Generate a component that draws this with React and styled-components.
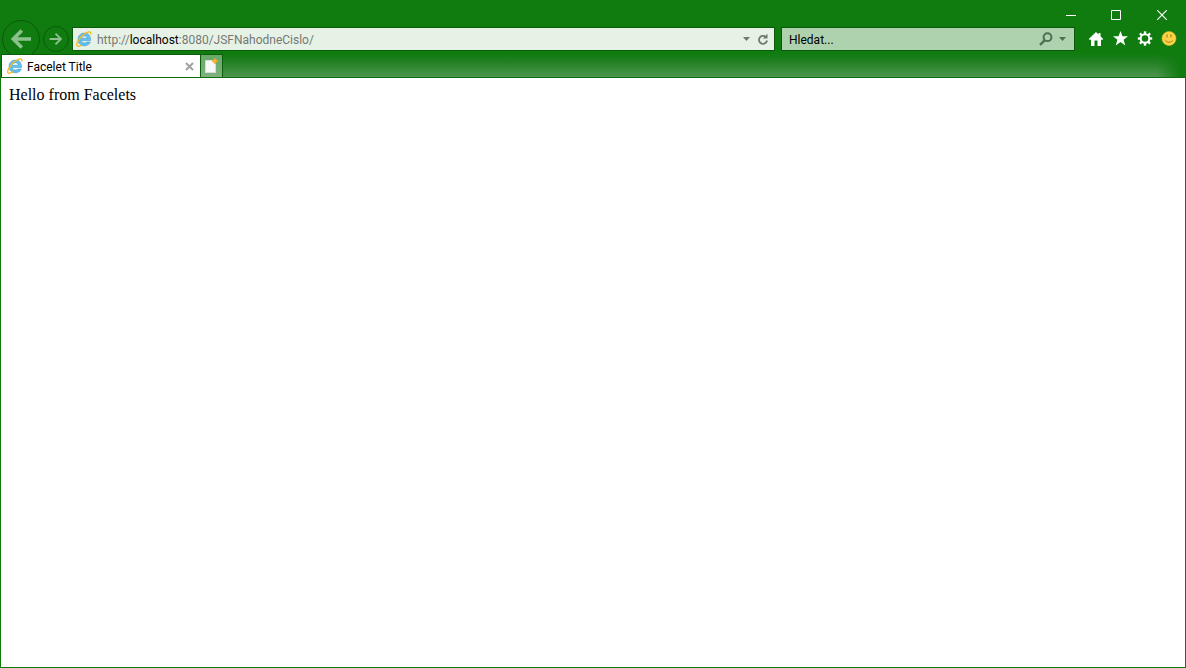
import React, { useState } from "react";
import styled, { createGlobalStyle } from "styled-components";

const GlobalStyle = createGlobalStyle`
  *, *::before, *::after { box-sizing: border-box; }
  body { margin: 0; background: #fff; }
  button, input { font: inherit; }
`;

const uiFont = `Roboto, "Open Sans", sans-serif`;

const BrowserWindow = styled.div`
  display: flex;
  flex-direction: column;
  min-height: 100vh;
  background: #107c10;
  font: 12px/16px ${uiFont};
  color: #000;
`;

const IconButton = styled.button`
  display: flex;
  align-items: center;
  justify-content: center;
  flex: none;
  width: ${(p) => p.$width || 24}px;
  height: ${(p) => p.$height || 22}px;
  padding: 0;
  border: 0;
  background: transparent;
  color: ${(p) => p.$color || "#fff"};
`;

const TitleBar = styled.header`
  display: flex;
  justify-content: flex-end;
  height: 27px;
  padding: 3px 1px 0 0;
`;

const Toolbar = styled.nav`
  display: flex;
  align-items: center;
  height: 24px;
  padding: 0 5px 0 2px;
`;

const RoundButton = styled.button`
  display: flex;
  align-items: center;
  justify-content: center;
  flex: none;
  width: ${(p) => p.$size}px;
  height: ${(p) => p.$size}px;
  margin-right: 3px;
  padding: 0;
  border: 1px solid #0b590b;
  border-radius: 50%;
  background: #107c10;
  color: #8cc08c;
`;

const Field = styled.form`
  display: flex;
  align-items: center;
  height: 24px;
  min-width: 0;
  border: 1px solid #0b590b;
  background: ${(p) => p.$fill};
`;

const AddressField = styled(Field)`
  flex: 1;
  padding: 0 2px 0 3px;
  margin: 0 6px 0 0;
`;

const SearchField = styled(Field)`
  flex: 0 1 294px;
  padding: 0 6px 0 7px;
  margin: 0 10px 0 0;
`;

const TextInput = styled.input`
  flex: 1;
  width: 100%;
  min-width: 0;
  height: 22px;
  padding: 2px 0 0;
  border: 0;
  outline: 0;
  background: transparent;
  color: ${(p) => (p.$masked ? "transparent" : "#000")};
  caret-color: #000;
  &::placeholder { color: #000; opacity: 1; }
`;

const AddressText = styled.div`
  position: relative;
  display: flex;
  flex: 1;
  min-width: 0;
  margin-left: 5px;
`;

const AddressOverlay = styled.span`
  position: absolute;
  inset: 4px 0 auto;
  overflow: hidden;
  white-space: nowrap;
  pointer-events: none;
  color: #747874;
  b { color: #000; font-weight: 400; }
`;

const TabStrip = styled.div`
  position: relative;
  display: flex;
  height: 24px;
  margin-top: 3px;
  padding-left: 1px;
  border-bottom: 1px solid #0e6b0e;
`;

const Tab = styled.div`
  display: flex;
  align-items: center;
  width: 200px;
  padding: 0 2px 0 5px;
  border: 1px solid #0b5f0b;
  border-bottom: 0;
  background: #fff;
`;

const TabLabel = styled.span`
  flex: 1;
  margin-left: 4px;
  padding-top: 2px;
  white-space: nowrap;
`;

const NewTabButton = styled.button`
  display: flex;
  align-items: center;
  justify-content: center;
  width: 22px;
  padding: 0 1px 0 0;
  border: 1px solid #0b5f0b;
  border-width: 1px 1px 0 0;
  background: linear-gradient(#68a868, #7eb17e);
`;

const StripGlow = styled.div`
  flex: 1;
  margin-right: 5px;
  background: linear-gradient(#107c10, #207f20 30%, #4d954d);
  mask-image: linear-gradient(to left, transparent, #000 24px);
`;

const Page = styled.main`
  flex: 1;
  margin: 0 1px 1px;
  padding: 8px;
  background: #fff;
  font: 16px/18px "Liberation Serif", "Times New Roman", serif;
`;

function BrowserLogo() {
  return (
    <svg width="16" height="16" viewBox="0 0 16 16" aria-hidden="true">
      <path fillRule="evenodd" d="M14.600 9.600H5.200c.2 1.500 1.600 2.500 3.300 2.500 1.100 0 1.900-.4 2.400-1h3.400c-.9 2.400-3.100 3.700-5.900 3.700-3.900 0-6.400-2.600-6.400-6.300s2.700-6.400 6.500-6.400c4 0 6.300 3 6.100 7.500zM5.200 7.200h6.200c-.2-1.500-1.400-2.400-3-2.400S5.500 5.700 5.200 7.200z" fill="#62c0ee" stroke="#2f92cf" strokeWidth=".5" />
      <path d="M5.500 14c-2.400 1.500-4.200 1.800-4.700.6-.4-1 .1-2.600 1.200-4.500C4.300 6 8.500 2.400 12 1.200c2.400-.8 3.300 0 2.800 1.800" fill="none" stroke="#f7ba1c" strokeWidth="1.300" strokeLinecap="round" />
    </svg>
  );
}

function Arrow({ size, flip }) {
  return (
    <svg width={size} height={size} viewBox="0 0 22 22" aria-hidden="true">
      <path
        d="M21 11H3.500M11.800 2.500L3.300 11l8.500 8.500"
        transform={flip ? "translate(22 0) scale(-1 1)" : undefined}
        fill="none" stroke="currentColor" strokeWidth={flip ? 3 : 3.600}
      />
    </svg>
  );
}

function Caret() {
  return (
    <svg width="7" height="4" viewBox="0 0 7 4" aria-hidden="true">
      <path d="M0 0h7L3.500 4z" fill="currentColor" />
    </svg>
  );
}

function Gear() {
  return (
    <svg width="16" height="16" viewBox="0 0 16 16" aria-hidden="true">
      <circle cx="8" cy="7.500" r="4.300" fill="none" stroke="#fff" strokeWidth="2" />
      {[0, 45, 90, 135, 180, 225, 270, 315].map((a) => (
        <path key={a} d="M6.800.3h2.400v2.600H6.800z" fill="#fff" transform={`rotate(${a} 8 7.5)`} />
      ))}
    </svg>
  );
}

function Smiley() {
  return (
    <svg width="16" height="16" viewBox="0 0 16 16" aria-hidden="true">
      <circle cx="8" cy="7.500" r="7" fill="#fdd243" stroke="#d9bc35" strokeWidth=".6" />
      <path d="M6 3.500v3M10 3.500v3" stroke="#a6812c" strokeWidth="1.200" />
      <path d="M4.200 9.300c1.700 2.600 5.900 2.600 7.600 0" fill="none" stroke="#a6812c" />
    </svg>
  );
}

export default function App() {
  const [address, setAddress] = useState("http://localhost:8080/JSFNahodneCislo/");
  const parts = address.match(/^(\w+:\/\/)?([^:/]*)(.*)$/) || ["", "", address, ""];
  const stay = (e) => e.preventDefault();

  return (
    <BrowserWindow>
      <GlobalStyle />
      <TitleBar>
        <IconButton $width={46} $height={24} aria-label="Minimize">
          <svg width="10" height="11" viewBox="0 0 10 11"><path d="M0 5.500h10" stroke="currentColor" /></svg>
        </IconButton>
        <IconButton $width={45} $height={24} aria-label="Maximize">
          <svg width="11" height="11" viewBox="0 0 11 11"><path d="M.5.5h9v9h-9z" fill="none" stroke="currentColor" /></svg>
        </IconButton>
        <IconButton $width={46} $height={24} aria-label="Close window">
          <svg width="10" height="10" viewBox="0 0 10 10"><path d="M0 0l10 10M10 0L0 10" stroke="currentColor" strokeWidth="1.200" /></svg>
        </IconButton>
      </TitleBar>

      <Toolbar>
        <RoundButton $size={38} aria-label="Back"><Arrow size={22} /></RoundButton>
        <RoundButton $size={26} aria-label="Forward"><Arrow size={14} flip /></RoundButton>
        <AddressField $fill="#e7f2e7" onSubmit={stay}>
          <BrowserLogo />
          <AddressText>
            <TextInput
              $masked
              aria-label="Address"
              spellCheck={false}
              value={address}
              onChange={(e) => setAddress(e.target.value)}
            />
            <AddressOverlay aria-hidden="true">{parts[1]}<b>{parts[2]}</b>{parts[3]}</AddressOverlay>
          </AddressText>
          <IconButton type="button" $width={16} $color="#6f7a6f" aria-label="Show address history"><Caret /></IconButton>
          <IconButton type="button" $width={18} $color="#6f7a6f" aria-label="Refresh">
            <svg width="12" height="13" viewBox="0 0 12 13">
              <path d="M8.500 3.700A4 4 0 1 0 10 7.500" fill="none" stroke="currentColor" strokeWidth="1.800" />
              <path d="M10.500.8v4.700H5.800z" fill="currentColor" />
            </svg>
          </IconButton>
        </AddressField>
        <SearchField $fill="#add2ad" role="search" onSubmit={stay}>
          <TextInput aria-label="Search" placeholder="Hledat..." />
          <IconButton $width={20} $color="#4f6f4f" aria-label="Run search">
            <svg width="14" height="14" viewBox="0 0 14 14">
              <circle cx="8.500" cy="5.200" r="3.900" fill="none" stroke="currentColor" strokeWidth="2" />
              <path d="M5.800 8.200L1 13" stroke="currentColor" strokeWidth="2.400" />
            </svg>
          </IconButton>
          <IconButton type="button" $width={12} $color="#4f6f4f" aria-label="Search options"><Caret /></IconButton>
        </SearchField>
        <IconButton aria-label="Home">
          <svg width="16" height="16" viewBox="1 0 16 16">
            <path d="M8 1L.8 8l1.200 1.200 1-.9V15h3.500V9.500h3V15H13V8.300l1 .9L15.200 8 12.500 5.300V2h-2v1.400z" fill="currentColor" />
          </svg>
        </IconButton>
        <IconButton aria-label="Favorites">
          <svg width="16" height="16" viewBox="0 0 16 16">
            <path d="M7.500 0l2 5.300H15L10.600 8.700l1.700 5.800-4.800-3.400-4.800 3.400 1.700-5.800L0 5.300h5.500z" fill="currentColor" />
          </svg>
        </IconButton>
        <IconButton aria-label="Tools"><Gear /></IconButton>
        <IconButton aria-label="Send feedback"><Smiley /></IconButton>
      </Toolbar>

      <TabStrip>
        <Tab>
          <BrowserLogo />
          <TabLabel>Facelet Title</TabLabel>
          <IconButton $width={18} $color="#a2a2a2" aria-label="Close tab">
            <svg width="9" height="9" viewBox="0 0 9 9"><path d="M1 1l7 7M8 1L1 8" stroke="currentColor" strokeWidth="2" /></svg>
          </IconButton>
        </Tab>
        <NewTabButton aria-label="New tab">
          <svg width="14" height="16" viewBox="0 0 14 16">
            <path d="M1.500 2.500h10v12h-10z" fill="#f8f8f8" stroke="#d9ddd9" />
            <path d="M11 .5l1 1.500 1.800 1-1.800 1-1 1.800-1-1.800-1.800-1 1.800-1z" fill="#ffb52e" stroke="#f2a324" />
          </svg>
        </NewTabButton>
        <StripGlow />
      </TabStrip>

      <Page>Hello from Facelets</Page>
    </BrowserWindow>
  );
}
